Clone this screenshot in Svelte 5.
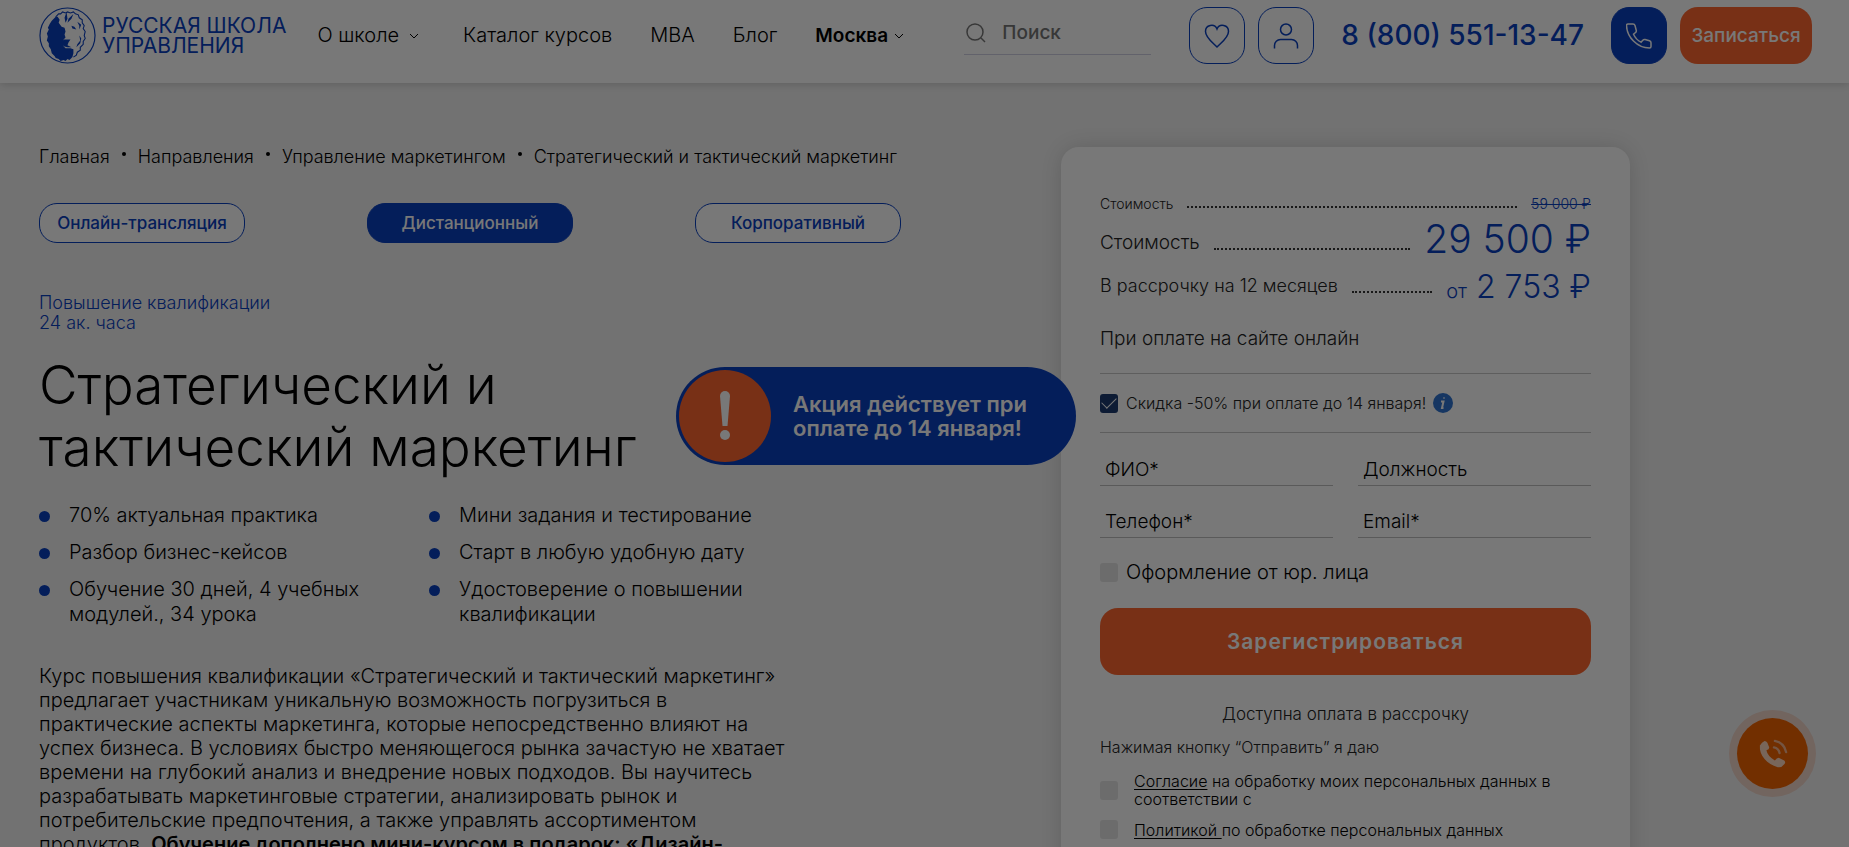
<script lang="ts">
  const crumbs = ['Главная', 'Направления', 'Управление маркетингом', 'Стратегический и тактический маркетинг'];
  const formats = ['Онлайн-трансляция', 'Дистанционный', 'Корпоративный'];
  const features = [
    '70% актуальная практика',
    'Мини задания и тестирование',
    'Разбор бизнес-кейсов',
    'Старт в любую удобную дату',
    'Обучение 30 дней, 4 учебных модулей., 34 урока',
    'Удостоверение о повышении квалификации',
  ];
  const fields = [
    { name: 'fio', label: 'ФИО*', type: 'text' },
    { name: 'position', label: 'Должность', type: 'text' },
    { name: 'phone', label: 'Телефон*', type: 'tel' },
    { name: 'email', label: 'Email*', type: 'email' },
  ];

  let format = $state('Дистанционный');
</script>

{#snippet chevron()}
  <svg class="chevron" viewBox="0 0 10 6" aria-hidden="true"><path d="M1 1l4 4 4-4" /></svg>
{/snippet}

<div class="page">
  <header class="header">
    <a class="logo" href="/">
      <svg viewBox="0 0 58 58" aria-hidden="true">
        <circle cx="29" cy="29" r="28" fill="none" stroke="currentColor" stroke-width="1.2" />
        <path
          fill="currentColor"
          d="M17 10l-4 4-2 3-2 4 1 2-2 4 1 3-1 4 2 3 0 3 2 3 1 4 3 3 1 2 3 1 2 2 3-1 2 1 2-2 2 1 3-3 1-4 0-4-3-1-5 0-2-2 1-4-1-3 2-2-1-3 1-3-1-4-3-1-3-4 1-3-2-3z"
        />
        <path
          fill="none"
          stroke="currentColor"
          stroke-width="1.1"
          d="M17 10l3-3 2 0 2-2 3 1 2-1 3 1 3-1 2 2 3 1 1 3 3 2 0 3 2 3-1 3 2 3-1 4 1 3-2 3 0 3-3 3 0 3-3 2-1 3-3 2"
        />
        <path fill="currentColor" d="M28 5l1 7-2 4-1-5zM35 7l-5 5-1 4 4-4zM33 19l3 1 2 3-4-1zM39 15l2 4 0 4 2-5zM41 29l1 5-3 4-1 3 4-4 1-5z" />
        <path fill="currentColor" d="M25 33l7 0-2 3-1 3 4 2-4 0-4-1z" />
      </svg>
      <span>РУССКАЯ ШКОЛА<br />УПРАВЛЕНИЯ</span>
    </a>

    <nav class="nav">
      <a href="#school" class="with-chevron school">О школе {@render chevron()}</a>
      <a href="#catalog">Каталог курсов</a>
      <a href="#mba">MBA</a>
      <a href="#blog">Блог</a>
      <a href="#city" class="with-chevron city">Москва {@render chevron()}</a>
    </nav>

    <label class="search">
      <svg viewBox="0 0 20 20" aria-hidden="true"><circle cx="9" cy="9" r="8" /><path d="M15 15l4 4" /></svg>
      <input type="search" placeholder="Поиск" aria-label="Поиск" />
    </label>

    <div class="actions">
      <button class="icon-button" aria-label="Избранное">
        <svg viewBox="0 0 26 26"><path d="M13 24C8 19 1.500 14.500 1.500 8.500a6 6 0 0 1 11.500-2.500 6 6 0 0 1 11.500 2.500C24.500 14.500 18 19 13 24z" /></svg>
      </button>
      <button class="icon-button" aria-label="Личный кабинет">
        <svg viewBox="0 0 26 26"><circle cx="13" cy="6.500" r="5.500" /><path d="M1.500 25.500v-3a6 6 0 0 1 6-6h11a6 6 0 0 1 6 6v3" /></svg>
      </button>
      <a class="phone" href="tel:88005511347">8 (800) 551-13-47</a>
      <button class="icon-button filled" aria-label="Позвонить">
        <svg viewBox="0 0 26 26"><path d="M2 1h5q1.500 0 2 1.500l1.300 5q.3 1.300-.8 2l-2 1.700q2.500 5.500 7.500 8l1.800-2q1-1 2.200-.7l4.500 1.300q1.500.5 1.500 2v3.700q0 1.500-1.500 1.500C11 25 1 14 .5 2.500Q.5 1 2 1z" /></svg>
      </button>
      <button class="signup">Записаться</button>
    </div>
  </header>

  <main class="content">
    <section class="course">
      <nav class="crumbs" aria-label="Навигация">
        {#each crumbs as crumb, i}
          {#if i > 0}<span class="dot"></span>{/if}
          <a href="#{i}">{crumb}</a>
        {/each}
      </nav>

      <div class="formats">
        {#each formats as item}
          <button class:active={item === format} onclick={() => (format = item)}>{item}</button>
        {/each}
      </div>

      <p class="kind">Повышение квалификации<br />24 ак. часа</p>

      <div class="title-row">
        <h1>Стратегический и тактический маркетинг</h1>
        <div class="promo">
          <span class="promo-icon">
            <svg viewBox="0 0 12 50" aria-hidden="true"><path d="M1 5a5 5 0 0 1 10 0L8.500 35h-5z" /><circle cx="6" cy="44" r="5" /></svg>
          </span>
          <strong>Акция действует при оплате до 14 января!</strong>
        </div>
      </div>

      <ul class="features">
        {#each features as feature}
          <li>{feature}</li>
        {/each}
      </ul>

      <p class="about">
        Курс повышения квалификации «Стратегический и тактический маркетинг» предлагает участникам уникальную
        возможность погрузиться в практические аспекты маркетинга, которые непосредственно влияют на успех бизнеса. В
        условиях быстро меняющегося рынка зачастую не хватает времени на глубокий анализ и внедрение новых подходов. Вы
        научитесь разрабатывать маркетинговые стратегии, анализировать рынок и потребительские предпочтения, а также
        управлять ассортиментом продуктов. <b>Обучение дополнено мини-курсом в подарок: «Дизайн-</b>
      </p>
    </section>

    <form class="card">
      <div class="price old">
        <span>Стоимость</span><i></i><s>59 000 ₽</s>
      </div>
      <div class="price main">
        <span>Стоимость</span><i></i><b>29 500 ₽</b>
      </div>
      <div class="price monthly">
        <span>В рассрочку на 12 месяцев</span><i></i><b><small>от</small> 2 753 ₽</b>
      </div>
      <p class="online">При оплате на сайте онлайн</p>

      <div class="discount">
        <label class="check"><input type="checkbox" checked /> Скидка -50% при оплате до 14 января!</label>
        <svg class="info" viewBox="0 0 20 20" aria-hidden="true">
          <circle cx="10" cy="10" r="10" />
          <path d="M8 8.500h2.500L9 15h1.500M11 4.500v1" />
        </svg>
      </div>

      <div class="fields">
        {#each fields as field}
          <input type={field.type} name={field.name} placeholder={field.label} aria-label={field.label} />
        {/each}
      </div>

      <label class="check legal"><input type="checkbox" /> Оформление от юр. лица</label>

      <button class="submit" type="button">Зарегистрироваться</button>

      <p class="note">Доступна оплата в рассрочку</p>
      <p class="hint">Нажимая кнопку “Отправить” я даю</p>
      <label class="check consent">
        <input type="checkbox" />
        <span><a href="#consent">Согласие</a> на обработку моих персональных данных в соответствии с</span>
      </label>
      <label class="check consent">
        <input type="checkbox" />
        <span><a href="#policy">Политикой&nbsp;</a>по обработке персональных данных</span>
      </label>
    </form>
  </main>

  <button class="callback" aria-label="Обратный звонок">
    <svg viewBox="0 0 32 32" aria-hidden="true">
      <path class="handset" d="M2 7q2-4 5-5 2 0 3 2l2 5q0 2-3 3 1 6 9 11 2-3 4-3l6 3q2 2 0 4-3 4-7 3C10 27 1 18 2 7z" />
      <path class="wave" d="M17 9q5 1 6 6M18 2q10 2 12 12" />
    </svg>
  </button>

  <div class="backdrop"></div>
</div>

<style>
  :global(body) {
    margin: 0;
  }

  .page {
    --blue: #0a40c0;
    --orange: #ff6630;
    background: #f3f3f3;
    box-sizing: border-box;
    color: #000;
    font-family: Inter, 'Liberation Sans', sans-serif;
    font-size: 20px;
    font-weight: 300;
    height: 100vh;
    line-height: 25px;
    overflow: hidden;
    position: relative;
  }

  .page :global(*) {
    box-sizing: border-box;
  }

  a {
    color: inherit;
    text-decoration: none;
  }

  p,
  h1,
  ul {
    margin: 0;
    padding: 0;
  }

  button,
  input {
    font: inherit;
  }

  button {
    border: 0;
    cursor: pointer;
    padding: 0;
  }

  svg {
    display: block;
    flex: none;
  }

  .header {
    align-items: center;
    background: #fff;
    box-shadow: 0 2px 8px rgba(0, 0, 0, 0.15);
    display: flex;
    padding: 7px 37px 19px 39px;
    position: relative;
    white-space: nowrap;
  }

  .logo {
    align-items: center;
    color: var(--blue);
    display: flex;
    font-size: 21px;
    font-weight: 400;
    gap: 6px;
    line-height: 20px;
  }

  .logo svg {
    height: 57px;
    width: 57px;
  }

  .nav {
    display: flex;
    gap: 38px;
    margin-left: 31px;
  }

  .with-chevron {
    align-items: center;
    display: flex;
    gap: 10px;
  }

  .school {
    margin-right: 6px;
  }

  .city {
    font-size: 19px;
    font-weight: 600;
    gap: 6px;
  }

  .chevron {
    fill: none;
    height: 6px;
    stroke: currentColor;
    width: 10px;
  }

  .search {
    align-items: center;
    border-bottom: 1px solid #d0d0e4;
    display: flex;
    flex: 0 1 187px;
    gap: 16px;
    height: 39px;
    margin-left: auto;
    padding: 0 0 5px 2px;
  }

  .search svg {
    fill: none;
    height: 20px;
    stroke: #777;
    stroke-width: 1.5;
    width: 20px;
  }

  .search input {
    appearance: none;
    background: none;
    border: 0;
    font-size: 19px;
    font-weight: 500;
    min-width: 0;
    outline: 0;
    padding: 0;
    width: 100%;
  }

  .search input::placeholder {
    color: #757575;
    opacity: 1;
  }

  .actions {
    align-items: center;
    display: flex;
    gap: 13px;
    margin-left: 38px;
  }

  .icon-button {
    background: none;
    border: 1px solid var(--blue);
    border-radius: 18px;
    color: var(--blue);
    display: grid;
    height: 57px;
    place-items: center;
    width: 56px;
  }

  .icon-button svg {
    fill: none;
    height: 26px;
    stroke: currentColor;
    stroke-width: 1.5;
    width: 26px;
  }

  .filled {
    background: var(--blue);
    color: #fff;
  }

  .phone {
    color: var(--blue);
    font-size: 28px;
    font-weight: 500;
    margin: 0 14px;
  }

  .signup {
    background: var(--orange);
    border-radius: 18px;
    color: #fff;
    font-size: 19px;
    font-weight: 500;
    height: 57px;
    width: 132px;
  }

  .content {
    align-items: start;
    display: grid;
    gap: 160px;
    grid-template-columns: minmax(0, 1fr) 569px;
    margin-left: 39px;
    max-width: 1591px;
    padding-top: 64px;
  }

  .crumbs {
    display: flex;
    font-size: 18px;
    gap: 12px;
    line-height: 20px;
    white-space: nowrap;
  }

  .dot {
    background: #000;
    border-radius: 50%;
    height: 4px;
    margin-top: 5px;
    width: 4px;
  }

  .formats {
    display: flex;
    justify-content: space-between;
    margin-top: 36px;
  }

  .formats button {
    background: #fff;
    border: 1px solid var(--blue);
    border-radius: 18px;
    color: var(--blue);
    font-size: 17px;
    font-weight: 500;
    height: 40px;
    width: 206px;
  }

  .formats .active {
    background: var(--blue);
    color: #fff;
  }

  .kind {
    color: var(--blue);
    font-size: 18px;
    line-height: 20px;
    margin-top: 50px;
  }

  .title-row {
    align-items: center;
    display: flex;
    margin-top: 21px;
  }

  h1 {
    flex: 0 0 637px;
    font-size: 53px;
    font-weight: 300;
    line-height: 62px;
  }

  .promo {
    align-items: center;
    background: var(--blue);
    border-radius: 49px;
    color: #fff;
    display: flex;
    flex: 0 0 400px;
    gap: 22px;
    height: 98px;
    padding: 3px;
    z-index: 1;
  }

  .promo-icon {
    background: var(--orange);
    border-radius: 50%;
    display: grid;
    flex: none;
    height: 92px;
    place-items: center;
    width: 92px;
  }

  .promo svg {
    fill: #fff;
    height: 50px;
    width: 12px;
  }

  .promo strong {
    font-size: 22px;
    font-weight: 600;
    line-height: 24px;
    width: 260px;
  }

  .features {
    column-gap: 30px;
    display: grid;
    grid-template-columns: 360px 360px;
    list-style: none;
    margin-top: 25px;
    row-gap: 12px;
  }

  .features li {
    display: flex;
    gap: 19px;
  }

  .features li::before {
    background: var(--blue);
    border-radius: 50%;
    content: '';
    flex: none;
    height: 11px;
    margin-top: 8px;
    width: 11px;
  }

  .about {
    line-height: 24px;
    margin-top: 37px;
    max-width: 756px;
  }

  .about b {
    font-weight: 600;
  }

  .card {
    background: #fff;
    border-radius: 18px;
    box-shadow: 0 0 24px rgba(0, 0, 0, 0.15);
    color: #222;
    font-size: 19px;
    min-height: 800px;
    padding: 47px 39px;
  }

  .price {
    align-items: flex-end;
    display: flex;
    white-space: nowrap;
  }

  .price i {
    border-bottom: 2px dotted #333;
    flex: 1;
    margin: 0 14px 6px;
  }

  .price span {
    margin-bottom: 6px;
  }

  .price s,
  .price b {
    color: var(--blue);
    font-weight: 300;
  }

  .old {
    font-size: 14px;
    line-height: 20px;
  }

  .price.old span {
    margin: 0;
  }

  .main {
    margin-top: 3px;
  }

  .main i,
  .monthly i {
    margin-bottom: 11px;
  }

  .main b {
    font-size: 39px;
    line-height: 44px;
  }

  .monthly {
    font-size: 18px;
    height: 34px;
    margin-top: 9px;
  }

  .monthly b {
    font-size: 32px;
    line-height: 34px;
  }

  .monthly small {
    font-size: 20px;
    line-height: 20px;
  }

  .online {
    margin-top: 22px;
  }

  .discount {
    align-items: center;
    border: solid #c8c8c8;
    border-width: 1px 0;
    display: flex;
    font-size: 16px;
    gap: 7px;
    height: 60px;
    margin-top: 22px;
  }

  .info {
    fill: #2f74d0;
    height: 20px;
    width: 20px;
  }

  .info path {
    fill: none;
    stroke: #fff;
    stroke-width: 2;
  }

  .check {
    align-items: center;
    display: flex;
    gap: 8px;
  }

  .check input {
    appearance: none;
    background: #e6e6e6;
    border-radius: 3px;
    display: grid;
    flex: none;
    height: 19px;
    margin: 0;
    place-items: center;
    width: 18px;
  }

  .check input:checked {
    background: #1c3b70;
  }

  .check input:checked::after {
    border: solid #fff;
    border-width: 0 0 1px 1px;
    content: '';
    height: 7px;
    margin-bottom: 4px;
    transform: rotate(-45deg);
    width: 13px;
  }

  .fields {
    display: grid;
    gap: 19px 25px;
    grid-template-columns: 1fr 1fr;
    margin-top: 20px;
  }

  .fields input {
    background: none;
    border: 0;
    border-bottom: 1px solid #c0c0c0;
    height: 33px;
    min-width: 0;
    outline: 0;
    padding: 0 5px;
  }

  .fields input::placeholder {
    color: #000;
    opacity: 1;
  }

  .legal {
    color: #000;
    font-size: 20px;
    margin-top: 22px;
  }

  .submit {
    background: var(--orange);
    border-radius: 18px;
    color: #fff;
    font-size: 21px;
    font-weight: 600;
    height: 67px;
    letter-spacing: 1px;
    margin-top: 23px;
    width: 100%;
  }

  .note,
  .hint {
    line-height: 20px;
  }

  .note {
    font-size: 17px;
    margin-top: 29px;
    text-align: center;
  }

  .hint {
    font-size: 16px;
    margin: 13px 0 15px;
  }

  .consent {
    color: #000;
    font-size: 16px;
    gap: 16px;
    line-height: 18px;
    margin-bottom: 12px;
  }

  .consent a {
    text-decoration: underline;
    text-underline-offset: 2px;
  }

  .callback {
    background: #f26400;
    border-radius: 50%;
    bottom: 58px;
    box-shadow: 0 0 0 8px rgba(242, 100, 40, 0.2);
    display: grid;
    height: 71px;
    place-items: center;
    position: fixed;
    right: 41px;
    width: 71px;
  }

  .callback svg {
    height: 30px;
    width: 30px;
  }

  .handset {
    fill: #ffd8c0;
  }

  .wave {
    fill: none;
    stroke: #f6b48c;
    stroke-linecap: round;
    stroke-width: 2.5;
  }

  .backdrop {
    background: rgba(0, 0, 0, 0.53);
    inset: 0;
    position: fixed;
    z-index: 10;
  }
</style>
